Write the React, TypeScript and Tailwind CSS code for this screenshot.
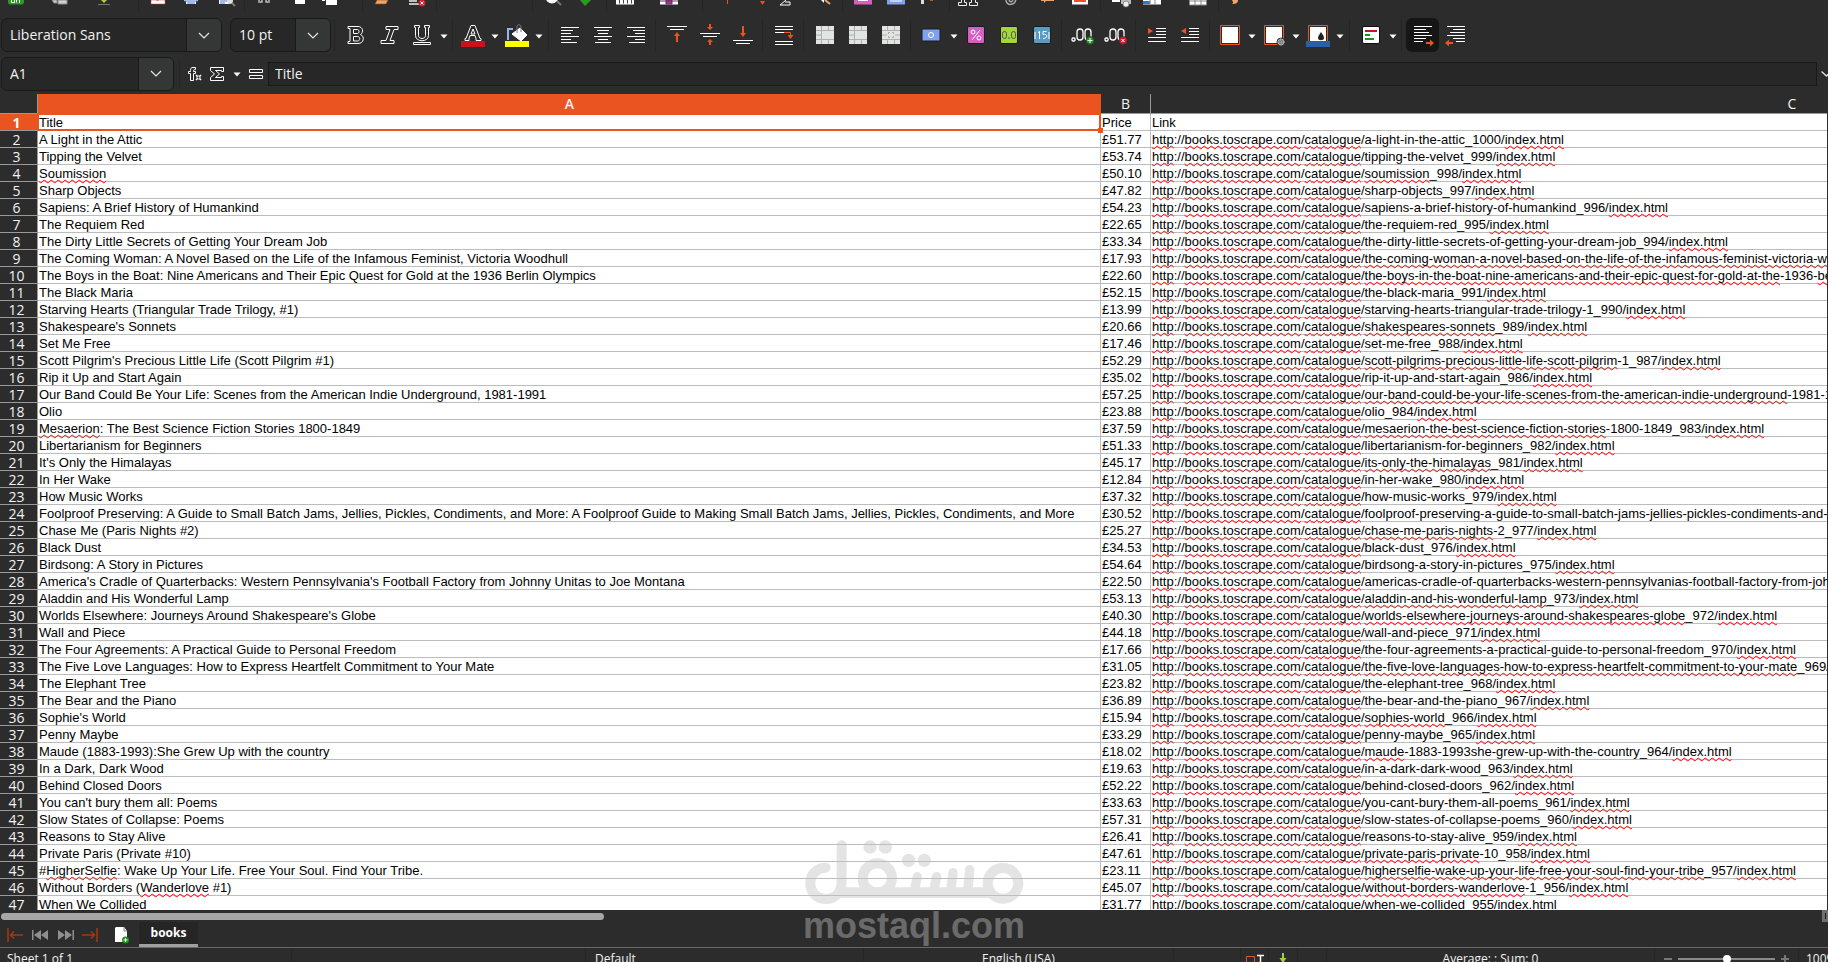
import type { ReactNode } from 'react';

// Braces mark the words that the spell checker underlines.
const books: [string, string, string][] = [
  ['A Light in the Attic', '51.77', 'a-light-in-the-attic_1000'],
  ['Tipping the Velvet', '53.74', 'tipping-the-velvet_999'],
  ['{Soumission}', '50.10', '{soumission}_998'],
  ['Sharp Objects', '47.82', 'sharp-objects_997'],
  ['Sapiens: A Brief History of Humankind', '54.23', 'sapiens-a-brief-history-of-humankind_996'],
  ['The Requiem Red', '22.65', 'the-requiem-red_995'],
  ['The Dirty Little Secrets of Getting Your Dream Job', '33.34', 'the-dirty-little-secrets-of-getting-your-dream-job_994'],
  [
    'The Coming Woman: A Novel Based on the Life of the Infamous Feminist, Victoria Woodhull',
    '17.93',
    '{the-coming-woman-a-novel-based-on-the-life-of-the-infamous-feminist-victoria-woodhull}_993',
  ],
  [
    'The Boys in the Boat: Nine Americans and Their Epic Quest for Gold at the 1936 Berlin Olympics',
    '22.60',
    '{the-boys-in-the-boat-nine-americans-and-their-epic-quest-for-gold-at-the}-1936-{berlin-olympics}_992',
  ],
  ['The Black Maria', '52.15', 'the-black-maria_991'],
  ['Starving Hearts (Triangular Trade Trilogy, #1)', '13.99', 'starving-hearts-triangular-trade-trilogy-1_990'],
  ["Shakespeare's Sonnets", '20.66', '{shakespeares-sonnets}_989'],
  ['Set Me Free', '17.46', 'set-me-free_988'],
  ["Scott Pilgrim's Precious Little Life (Scott Pilgrim #1)", '52.29', '{scott-pilgrims-precious-little-life-scott-pilgrim}-1_987'],
  ['Rip it Up and Start Again', '35.02', 'rip-it-up-and-start-again_986'],
  [
    'Our Band Could Be Your Life: Scenes from the American Indie Underground, 1981-1991',
    '57.25',
    '{our-band-could-be-your-life-scenes-from-the-american-indie-underground}-1981-1991_985',
  ],
  ['Olio', '23.88', 'olio_984'],
  ['{Mesaerion}: The Best Science Fiction Stories 1800-1849', '37.59', '{mesaerion-the-best-science-fiction-stories}-1800-1849_983'],
  ['Libertarianism for Beginners', '51.33', 'libertarianism-for-beginners_982'],
  ["It's Only the Himalayas", '45.17', '{its-only-the-himalayas}_981'],
  ['In Her Wake', '12.84', 'in-her-wake_980'],
  ['How Music Works', '37.32', 'how-music-works_979'],
  [
    'Foolproof Preserving: A Guide to Small Batch Jams, Jellies, Pickles, Condiments, and More: A Foolproof Guide to Making Small Batch Jams, Jellies, Pickles, Condiments, and More',
    '30.52',
    'foolproof-preserving-a-guide-to-small-batch-jams-jellies-pickles-condiments-and-more_978',
  ],
  ['Chase Me (Paris Nights #2)', '25.27', '{chase-me-paris-nights}-2_977'],
  ['Black Dust', '34.53', 'black-dust_976'],
  ['Birdsong: A Story in Pictures', '54.64', 'birdsong-a-story-in-pictures_975'],
  [
    "America's Cradle of Quarterbacks: Western Pennsylvania's Football Factory from Johnny Unitas to Joe Montana",
    '22.50',
    'americas-cradle-of-quarterbacks-western-pennsylvanias-football-factory-from-johnny-unitas_974',
  ],
  ['Aladdin and His Wonderful Lamp', '53.13', '{aladdin-and-his-wonderful-lamp}_973'],
  ["Worlds Elsewhere: Journeys Around Shakespeare's Globe", '40.30', '{worlds-elsewhere-journeys-around-shakespeares-globe}_972'],
  ['Wall and Piece', '44.18', 'wall-and-piece_971'],
  ['The Four Agreements: A Practical Guide to Personal Freedom', '17.66', 'the-four-agreements-a-practical-guide-to-personal-freedom_970'],
  [
    'The Five Love Languages: How to Express Heartfelt Commitment to Your Mate',
    '31.05',
    '{the-five-love-languages-how-to-express-heartfelt-commitment-to-your-mate}_969',
  ],
  ['The Elephant Tree', '23.82', 'the-elephant-tree_968'],
  ['The Bear and the Piano', '36.89', 'the-bear-and-the-piano_967'],
  ["Sophie's World", '15.94', '{sophies-world}_966'],
  ['Penny Maybe', '33.29', 'penny-maybe_965'],
  ['Maude (1883-1993):She Grew Up with the country', '18.02', '{maude}-1883-1993she-grew-up-with-the-country_964'],
  ['In a Dark, Dark Wood', '19.63', 'in-a-dark-dark-wood_963'],
  ['Behind Closed Doors', '52.22', 'behind-closed-doors_962'],
  ["You can't bury them all: Poems", '33.63', 'you-cant-bury-them-all-poems_961'],
  ['Slow States of Collapse: Poems', '57.31', 'slow-states-of-collapse-poems_960'],
  ['Reasons to Stay Alive', '26.41', 'reasons-to-stay-alive_959'],
  ['Private Paris (Private #10)', '47.61', '{private-paris-private}-10_958'],
  ['#{HigherSelfie}: Wake Up Your Life. Free Your Soul. Find Your Tribe.', '23.11', '{higherselfie-wake-up-your-life-free-your-soul-find-your-tribe}_957'],
  ['Without Borders ({Wanderlove} #1)', '45.07', '{without-borders-wanderlove}-1_956'],
  ['When We Collided', '31.77', 'when-we-collided_955'],
];

function Spelled({ text }: { text: string }) {
  return (
    <>
      {text.split(/[{}]/).map((part, i) =>
        i % 2 === 1 ? (
          <span key={i} className="underline decoration-[#ff0000] decoration-wavy decoration-1 underline-offset-1 [text-decoration-skip-ink:none]">
            {part}
          </span>
        ) : (
          part
        ),
      )}
    </>
  );
}

function Sep({ className = 'h-8 ml-[3px] mr-1' }: { className?: string }) {
  return <span className={`w-px shrink-0 bg-[#252525] ${className}`} />;
}

function Tool({ label, active, children }: { label: string; active?: boolean; children: ReactNode }) {
  return (
    <button
      type="button"
      aria-label={label}
      className={`flex h-[34px] w-[33px] shrink-0 items-center justify-center rounded-md ${active ? 'bg-[#161616]' : ''}`}
    >
      <svg viewBox="0 0 24 24" className="size-6" fill="none" stroke="#fff">
        {children}
      </svg>
    </button>
  );
}

function More({ label, className = 'w-[11px]' }: { label: string; className?: string }) {
  return (
    <button type="button" aria-label={label} className={`flex h-8 shrink-0 items-center justify-center ${className}`}>
      <svg viewBox="0 0 8 5" className="mt-0.5 h-[5px] w-2" fill="#fff">
        <path d="M0.5 0.5h7L4 4.5z" />
      </svg>
    </button>
  );
}

function Combo({ label, value, className }: { label: string; value: string; className: string }) {
  return (
    <div className={`relative h-[34px] shrink-0 overflow-hidden rounded-md border border-[#191919] bg-[#272727] ${className}`}>
      <select aria-label={label} className="h-full w-full appearance-none bg-transparent pl-2 text-sm text-[#f2f2f2] outline-none">
        <option>{value}</option>
      </select>
      <span className="pointer-events-none absolute inset-y-0 right-0 flex w-[35px] items-center justify-center border-l border-[#191919] bg-[#353737]">
        <svg viewBox="0 0 12 7" className="h-[7px] w-3" fill="none" stroke="#e6e6e6" strokeWidth="1.2">
          <path d="M1 1l5 5 5-5" />
        </svg>
      </span>
    </div>
  );
}

// Only the lower edge of the standard toolbar is in view.
const standardTools: { label: string; gap: string; icon?: ReactNode }[] = [
  { label: 'New', gap: 'ml-1.5', icon: <g><path d="M2 0h16v3l-1.500 1.500h-13L2 3z" fill="#2a9a22" /><path d="M5.500 0v2.500h3V0M10.500 2.500V0M13.500 0v3" stroke="#fff" /></g> },
  { label: 'Templates', gap: 'ml-6', icon: <path d="M2 0h5v3H4z M8 0h9v4H8z" fill="#d0d0d0" stroke="#8a8a8a" /> },
  { label: 'Save', gap: 'ml-6', icon: <g><path d="M7 0h6l-3 3z" fill="#a4d13a" /><path d="M4 4.5h12" stroke="#777" /></g> },
  { label: '', gap: 'ml-6' },
  { label: 'Export as PDF', gap: 'ml-[9px]', icon: <path d="M3 0h14v4H3z M8 1l3-1" fill="#fff" stroke="#c33" strokeWidth=".5" /> },
  { label: 'Print', gap: 'ml-[13px]', icon: <g><path d="M3 0h14v1H3z M5 1h10v3H5z" fill="#fff" /><path d="M3 1h14 M6 3h8" stroke="#4a76c9" /></g> },
  { label: 'Print Preview', gap: 'ml-4', icon: <g><path d="M2 0h10v4H2z" fill="#fff" /><path d="M3 1h7 M3 3h5" stroke="#4a76c9" /><circle cx="13" cy="1" r="3" fill="#ddd" /><path d="M15 3l3 3" stroke="#777" strokeWidth="2" /></g> },
  { label: '', gap: 'ml-[7px]' },
  { label: 'Cut', gap: 'ml-[9px]', icon: <path d="M5 0v2h3V0 M12 0v2h3V0" stroke="#bbb" strokeWidth="1.5" /> },
  { label: 'Copy', gap: 'ml-4', icon: <path d="M5 0h10v4H5z" fill="#fff" /> },
  { label: 'Paste', gap: 'ml-2.5', icon: <path d="M2 0h3v1H2z M6 0h11v5H6z" fill="#fff" /> },
  { label: '', gap: 'ml-[22px]' },
  { label: 'Clone Formatting', gap: 'ml-[9px]', icon: <path d="M5 0h11l-2 4H3z" fill="#f0a468" stroke="#8b4b20" strokeWidth=".6" /> },
  { label: 'Clear Formatting', gap: 'ml-[15px]', icon: <g><path d="M2 1h8 M2 4h10" stroke="#eee" strokeWidth="1.5" /><circle cx="15" cy="3" r="3.5" fill="#d0202c" /><path d="M13.5 1.5l3 3m0-3l-3 3" stroke="#fff" /></g> },
  { label: '', gap: 'ml-[9px]' },
  { label: '', gap: 'ml-[95px]' },
  { label: 'Find', gap: 'ml-2.5', icon: <g><circle cx="9" cy="-3" r="6.5" fill="#fff" /><path d="M14 1l4 4" stroke="#777" strokeWidth="2" /></g> },
  { label: 'Spelling', gap: 'ml-[13px]', icon: <path d="M4 0l5 6 6-6z" fill="#2a9a22" /> },
  { label: '', gap: 'ml-2.5' },
  { label: 'Row', gap: 'ml-2', icon: <g><path d="M1 0h18v4.500H1z" fill="#fff" /><path d="M4.500 0v3.500M8.500 0v3.500M12.500 0v3.500M16.500 0v3.500" stroke="#444" /></g> },
  { label: 'Column', gap: 'ml-6', icon: <g><path d="M1 0h18v4.500H1z" fill="#fff" /><path d="M7 0h6v4H7z M1 1h18" fill="#a0408e" stroke="#6b2a5e" /></g> },
  { label: '', gap: 'ml-[23px]' },
  { label: 'Sort', gap: 'ml-3.5', icon: <path d="M10.500 0v4" stroke="#e95420" /> },
  { label: 'Sort Ascending', gap: 'ml-[15px]', icon: <path d="M8 1h5l-2.500 4z" fill="#e95420" /> },
  { label: 'Sort Descending', gap: 'ml-[3px]', icon: <path d="M11 0L5 5h10V2h-5" stroke="#fff" /> },
  { label: 'Image', gap: 'ml-5', icon: <g><path d="M6 0l3 3V0z" fill="#fff" /><path d="M10 0l5 4" stroke="#f0a468" strokeWidth="2" /></g> },
  { label: '', gap: 'ml-[7px]' },
  { label: 'Insert Image', gap: 'ml-2.5', icon: <g><path d="M1 0h18v4.500H1z" fill="#d85ec4" /><path d="M5 0h10v1H5z" fill="#fff" /></g> },
  { label: 'Insert Chart', gap: 'ml-[13px]', icon: <g><path d="M1 0h18v4.500H1z" fill="#7ea1f0" /><path d="M4 1h12" stroke="#fff" /></g> },
  { label: 'Pivot Table', gap: 'ml-2.5', icon: <g><path d="M5 0h3v4H5z" fill="#ddd" /><path d="M14 0h3" stroke="#b85c20" strokeWidth="2" /></g> },
  { label: '', gap: 'ml-[13px]' },
  { label: 'Special Character', gap: 'ml-2', icon: <path d="M.500 5.500h8v-3h-2V0M11.500 5.500h8v-3h-2V0M.500 5.500v-3h3V0M11.500 5.500v-3h2V0" stroke="#eee" /> },
  { label: 'Hyperlink', gap: 'ml-[23px]', icon: <path d="M5 0c0 6 9 6 10-1 M8 0c1 3 4 2 4-1" stroke="#aaa" strokeWidth="1.5" /> },
  { label: 'Comment', gap: 'ml-4', icon: <path d="M4 0h13v1H9L7 3V1H4z" fill="#f0a468" /> },
  { label: 'Headers and Footers', gap: 'ml-[13px]', icon: <g><path d="M2 0h16v4.500H2z" fill="#fff" /><path d="M4 1h12" stroke="#e95420" strokeWidth="2" /></g> },
  { label: '', gap: 'ml-2.5' },
  { label: 'Print Area', gap: 'ml-[11px]', icon: <g><path d="M0 0h8v2H0z" fill="#fff" /><path d="M9 0h10v4H9z" fill="#bbb" /><circle cx="14" cy="4" r="3" fill="#eee" stroke="#888" /></g> },
  { label: 'Freeze', gap: 'ml-2.5', icon: <g><path d="M1 0h18v4.500H1z" fill="#fff" /><path d="M1 1h7v3H1z" fill="#2f78cc" /><path d="M8 0v4M13 0v4" stroke="#888" /></g> },
  { label: 'Split', gap: 'ml-[26px]', icon: <path d="M1.500 0v5h17V0M1 1h18M7 0v5M13 0v5" stroke="#888" fill="#fff" /> },
  { label: '', gap: 'ml-2.5' },
  { label: 'Draw', gap: 'ml-[5px]', icon: <path d="M8 0h6c0 3-2 4-6 4 2-1 1-2 0-4z" fill="#f0a468" /> },
];

function MergeIcon({ centered }: { centered?: boolean }) {
  return (
    <g>
      <path d="M3 3h18v18H3z" fill="#dfe5e2" stroke="none" />
      <path
        d={
          centered
            ? 'M3 7.500h18M3 16.500h18M8.500 3v4M15.500 3v4M8.500 17v4M15.500 17v4M3 12h5M16 12h5M9.500 9v2M14.500 9v2M9.500 15v-2M14.500 15v-2M9 9.500h2M13 9.500h2M9 14.500h2M13 14.500h2'
            : 'M3 7.500h18M3 16.500h18M8.500 3v18M15.500 3v4M15.500 17v4M3 12h5'
        }
        stroke="#b9a9a9"
      />
    </g>
  );
}

function FormattingBar() {
  return (
    <div className="flex h-9 shrink-0 items-center pl-px">
      <Combo label="Font Name" value="Liberation Sans" className="w-[221px]" />
      <Combo label="Font Size" value="10 pt" className="ml-2 w-[101px]" />
      <Sep />
      <Tool label="Bold">
        <path d="M4 3.500h10c5 0 6 6 2.500 8 4.500 2 3.500 9-2.500 9H4v-2h2v-13H4zM9.500 6.500v4h4c2 0 2-4 0-4zM9.500 13.500v4.500h4c3 0 3-4.500 0-4.500z" />
      </Tool>
      <Tool label="Italic">
        <path d="M9 3.500h12v3h-4l-4 11h4v3H4v-3h5l4-11H9z" />
      </Tool>
      <Tool label="Underline">
        <path d="M4.500 2.500h5v2H8.500v8c0 4 7 4 7 0v-8h-1v-2h5v2h-1v8c0 7-13 7-13 0v-8h-1zM3.500 19.500h17v2h-17z" />
      </Tool>
      <More label="Underline styles" />
      <Sep className="mx-[3px] h-8" />
      <Tool label="Font Color">
        <path d="M10 2.500h4l5 13h1v2h-5v-2l-1-3h-5l-1 3v2H4v-2h1zM12 6l-2 5h4z" />
        <path d="M0 18h24v6H0z" fill="#c9131c" stroke="none" />
      </Tool>
      <More label="Font Color palette" />
      <Tool label="Highlighting">
        <path d="M3 17V6h5" stroke="#8db8e8" strokeWidth="2" />
        <path d="M7 11l8-6 7 7-6 6z" fill="#fff" />
        <path d="M12 10V4c0-3 4-3 4 0v5" stroke="#777" />
        <path d="M0 18h24v6H0z" fill="#ffff00" stroke="none" />
      </Tool>
      <More label="Highlighting palette" />
      <Sep className="mx-1 h-8" />
      <Tool label="Align Left">
        <path d="M3 4.500h18M3 7.500h12M3 10.500h10M3 13.500h18M3 16.500h10M3 19.500h16" />
      </Tool>
      <Tool label="Center">
        <path d="M3 4.500h18M6 7.500h12M7 10.500h10M3 13.500h18M7 16.500h10M4 19.500h16" />
      </Tool>
      <Tool label="Align Right">
        <path d="M3 4.500h18M9 7.500h12M11 10.500h10M3 13.500h18M11 16.500h10M5 19.500h16" />
      </Tool>
      <Sep />
      <Tool label="Align Top">
        <path d="M2 3.500h20M5 6.500h14" />
        <path d="M11 19v-6H9l3-4 3 4h-2v6z" fill="#e95420" stroke="none" />
      </Tool>
      <Tool label="Center Vertically">
        <path d="M2 10.500h20M5 13.500h14" />
        <path d="M11 1h2v3h2l-3 3-3-3h2zM11 22h2v-3h2l-3-3-3 3h2z" fill="#e95420" stroke="none" />
      </Tool>
      <Tool label="Align Bottom">
        <path d="M2 17.500h20M5 20.500h14" />
        <path d="M11 3v7H9l3 4 3-4h-2V3z" fill="#e95420" stroke="none" />
      </Tool>
      <Sep />
      <Tool label="Wrap Text">
        <path d="M3 3.500h18M3 6.500h18M3 9.500h9M3 18.500h18M3 21.500h18" />
        <path d="M12 9.500h6.500V13" stroke="#e95420" />
        <path d="M15.500 12h6l-3 4z" fill="#e95420" stroke="none" />
      </Tool>
      <Sep />
      <Tool label="Merge and Center Cells">
        <MergeIcon />
      </Tool>
      <Tool label="Merge Cells">
        <MergeIcon />
      </Tool>
      <Tool label="Unmerge Cells">
        <MergeIcon centered />
      </Tool>
      <Sep />
      <Tool label="Format as Currency">
        <rect x="2" y="6" width="18" height="12" rx="1" fill="#7ea1f0" stroke="#1c1c1c" />
        <circle cx="11" cy="12" r="2.500" />
      </Tool>
      <More label="Currency formats" />
      <Tool label="Format as Percent">
        <rect x="3.500" y="3.500" width="17" height="17" rx="1.500" fill="#d85ec4" stroke="#1c1c1c" />
        <circle cx="9" cy="9" r="2" />
        <circle cx="15" cy="15" r="2" />
        <path d="M16 7L8 17" />
      </Tool>
      <Tool label="Format as Number">
        <rect x="3.500" y="3.500" width="17" height="17" rx="1.500" fill="#a2d63c" stroke="#1c1c1c" />
        <rect x="5.500" y="8.500" width="4" height="7" rx="2" stroke="#555" />
        <rect x="14.500" y="8.500" width="4" height="7" rx="2" stroke="#555" />
        <path d="M12 14v2" stroke="#555" />
      </Tool>
      <Tool label="Format as Date">
        <rect x="3.500" y="3.500" width="17" height="17" rx="1.500" fill="#5a9bc4" stroke="#1c1c1c" />
        <path d="M8 9.500l1.500-1V16M16.500 8.500H13v3c5-1 5 4 0 4M5 9v7M19 9v7" />
      </Tool>
      <Sep />
      <Tool label="Add Decimal Place">
        <g strokeWidth="1.300">
          <rect x="1" y="15" width="3" height="3" rx="1" />
          <rect x="6" y="6" width="6" height="11" rx="3" />
          <rect x="14" y="6" width="6" height="11" rx="3" />
        </g>
        <circle cx="19" cy="17.500" r="4" fill="#1f9320" stroke="#2c2c2c" strokeWidth=".6" />
        <path d="M16.500 17.500h5M19 15v5" />
      </Tool>
      <Tool label="Delete Decimal Place">
        <g strokeWidth="1.300">
          <rect x="1" y="15" width="3" height="3" rx="1" />
          <rect x="6" y="6" width="6" height="11" rx="3" />
          <rect x="14" y="6" width="6" height="11" rx="3" />
        </g>
        <circle cx="19" cy="17.500" r="4" fill="#d0202c" stroke="#2c2c2c" strokeWidth=".6" />
        <path d="M17.500 16l3 3m0-3l-3 3" />
      </Tool>
      <Sep />
      <Tool label="Increase Indent">
        <path d="M11 5.500h10M11 8.500h10M11 11.500h10M3 14.500h18M3 18.500h18" />
        <path d="M3 5v6l5-3z" fill="#e95420" stroke="none" />
      </Tool>
      <Tool label="Decrease Indent">
        <path d="M11 5.500h10M11 8.500h10M11 11.500h10M3 14.500h18M3 18.500h18" />
        <path d="M8 5v6L3 8z" fill="#e95420" stroke="none" />
      </Tool>
      <Sep className="mx-[3px] h-8" />
      <Tool label="Borders">
        <path d="M2.500 2.500h19v19h-19z" stroke="#e95420" />
        <path d="M4 4h16v16H4z" fill="#fff" stroke="none" />
      </Tool>
      <More label="Border positions" />
      <Tool label="Border Style">
        <path d="M2.500 2.500h19v19h-19z" stroke="#e95420" />
        <path d="M4 4h16v16H4z" fill="#fff" stroke="none" />
        <circle cx="19" cy="19" r="4" fill="#888" stroke="#2c2c2c" />
        <circle cx="19" cy="19" r="3" stroke="#ccc" strokeDasharray="1.500 1" />
      </Tool>
      <More label="Border styles" />
      <Tool label="Border Color">
        <path d="M2.500 2.500h19v19h-19z" stroke="#e95420" />
        <path d="M4 4h16v14H4z" fill="#fff" stroke="none" />
        <path d="M15 9c2 3 3 4 3 6 0 3-6 3-6 0 0-2 1-3 3-6z" fill="#222" stroke="none" />
        <path d="M0 18h24v6H0z" fill="#2a5fa5" stroke="none" />
      </Tool>
      <More label="Border colors" />
      <Sep className="mx-1 h-8" />
      <Tool label="Conditional Formatting">
        <rect x="3.500" y="3.500" width="17" height="17" rx="1.500" fill="#fff" stroke="#111" />
        <path d="M6 8h12" stroke="#c9131c" strokeWidth="2" />
        <path d="M6 12h5M6 16h9" stroke="#1f9320" strokeWidth="2" />
      </Tool>
      <More label="Conditional formats" />
      <Sep />
      <Tool label="Left-To-Right" active>
        <path d="M3 3.500h18M3 6.500h12M3 9.500h15M3 12.500h18M3 15.500h12M3 18.500h9" />
        <path d="M15 19h4v-2.500l4 3.500-4 3.500V21h-4z" fill="#e95420" stroke="none" />
      </Tool>
      <Tool label="Right-To-Left">
        <path d="M3 3.500h18M9 6.500h12M6 9.500h15M3 12.500h18M9 15.500h12M12 18.500h9" />
        <path d="M9 19H5v-2.500L1 20l4 3.500V21h4z" fill="#e95420" stroke="none" />
      </Tool>
    </div>
  );
}

function FormulaBar() {
  return (
    <div className="flex h-[41px] shrink-0 items-center pl-px">
      <Combo label="Name Box" value="A1" className="w-[173px]" />
      <Sep className="ml-[5px] mr-1 h-7" />
      <button type="button" aria-label="Function Wizard" className="flex w-[22px] justify-center">
        <svg viewBox="0 0 16 16" className="size-4" fill="none" stroke="#fff">
          <path d="M8.500 1.500H6c-2 0-2.500 1-2.500 3v1h-2v2h2v7h3v-7h2v-2h-2c0-1.500 0-2 2-2z" />
          <path d="M9 9l1.500 1.500M14 9l-1.500 1.500M9 14l1.500-1.500M14 14l-1.500-1.500" strokeWidth="1.500" />
          <circle cx="11.500" cy="11.500" r="1.500" />
        </svg>
      </button>
      <button type="button" aria-label="Select Function" className="flex w-[22px] justify-center">
        <svg viewBox="0 0 16 16" className="size-4" fill="none" stroke="#fff">
          <path d="M1.500 1.500h13v4h-2v-1H6.500l4 3.500-4 3.500h6v-1h2v4h-13v-3l4-3.500-4-3.500z" />
        </svg>
      </button>
      <More label="Functions" className="w-[17px]" />
      <button type="button" aria-label="Formula" className="flex w-[22px] justify-center">
        <svg viewBox="0 0 16 12" className="h-3 w-4" fill="none" stroke="#fff">
          <path d="M1.500 1.500h13v3h-13zM1.500 7.500h13v3h-13z" />
        </svg>
      </button>
      <input
        aria-label="Input line"
        defaultValue="Title"
        className="ml-px h-6 min-w-0 flex-1 border border-[#191919] bg-[#272727] px-1.5 text-sm text-[#f2f2f2] outline-none"
      />
      <button type="button" aria-label="Expand Formula Bar" className="flex w-[11px] justify-end overflow-hidden">
        <svg viewBox="0 0 7 6" className="h-1.5 w-[7px]" fill="none" stroke="#e6e6e6" strokeWidth="1.300">
          <path d="M0.500 0.500l5 4.500 5-5" />
        </svg>
      </button>
    </div>
  );
}

const head = 'border-b border-[#9a9a9a] p-0 text-center text-sm leading-4';
const rowHead = "border-b border-r border-[#9a9a9a] p-0 pt-px pr-1 text-center font-['Open_Sans','Noto_Sans',sans-serif] text-sm leading-[15px]";
const cell = 'h-[17px] border-b border-r border-[#bcbcbc] p-0 pt-px pl-px';

function Sheet() {
  return (
    <main className="min-h-0 flex-1 overflow-hidden pr-px">
      <div className="overflow-hidden">
        <table className="w-[2433px] table-fixed border-separate border-spacing-0 bg-white text-left font-['Liberation_Sans',Arial,sans-serif] text-[13px] leading-[15px] whitespace-pre text-black">
          <colgroup>
            <col className="w-[38px]" />
            <col className="w-[1063px]" />
            <col className="w-[50px]" />
            <col />
          </colgroup>
          <thead className="font-['Open_Sans','Noto_Sans',sans-serif] text-[#f2f2f2]">
            <tr className="h-5">
              <th className={`${head} border-r bg-[#2c2c2c]`} />
              <th scope="col" className={`${head} bg-[#e95420] font-semibold`}>
                A
              </th>
              <th scope="col" className={`${head} border-r bg-[#2c2c2c] font-normal`}>
                B
              </th>
              <th scope="col" className={`${head} bg-[#2c2c2c] font-normal`}>
                C
              </th>
            </tr>
          </thead>
          <tbody>
            <tr>
              <th scope="row" className={`${rowHead} bg-[#e95420] font-bold text-white`}>
                1
              </th>
              <td className={`relative ${cell}`}>
                Title
                <span className="absolute -inset-px border-2 border-[#e95420]" />
                <span className="absolute -right-[3px] -bottom-[3px] z-10 size-[5px] bg-[#e95420]" />
              </td>
              <td className={cell}>Price</td>
              <td className={cell}>Link</td>
            </tr>
            {books.map(([title, price, slug], i) => (
              <tr key={slug}>
                <th scope="row" className={`${rowHead} bg-[#2c2c2c] font-normal text-[#f2f2f2]`}>
                  {i + 2}
                </th>
                <td className={cell}>
                  <Spelled text={title} />
                </td>
                <td className={cell}>£{price}</td>
                <td className={cell}>
                  <Spelled text={`{http}://{books.toscrape.com}/{catalogue}/${slug}/{index.html}`} />
                </td>
              </tr>
            ))}
          </tbody>
        </table>
      </div>
    </main>
  );
}

function SheetTabs() {
  return (
    <div className="shrink-0 border-b border-[#6a6a6a]">
      <div className="flex h-3 justify-between pt-[3px] pl-px">
        <div className="h-[7px] w-[33%] rounded-sm bg-[#a6a6a6]" />
        <div className="-mt-[3px] flex h-3 w-1.5 items-center justify-center bg-[#6f6f6f]">
          <span className="h-1.5 w-px bg-[#1c1c1c]" />
        </div>
      </div>
      <div className="flex h-[25px] items-center pl-[7px] text-[#8f8f8f]">
        <button type="button" aria-label="First Sheet" className="w-[25px] text-[#a23a10]">
          <svg viewBox="0 0 16 14" className="h-3.5 w-4" fill="none" stroke="currentColor" strokeWidth="1.500">
            <path d="M1 0v14M3 7h13M7 3.500L3.500 7 7 10.500" />
          </svg>
        </button>
        <button type="button" aria-label="Previous Sheet" className="w-[26px]">
          <svg viewBox="0 0 16 10" className="h-2.5 w-4" fill="currentColor">
            <path d="M0 0h1.500v10H0zM9 0v10L2 5zM16 0v10L9 5z" />
          </svg>
        </button>
        <button type="button" aria-label="Next Sheet" className="w-6">
          <svg viewBox="0 0 16 10" className="h-2.5 w-4" fill="currentColor">
            <path d="M14.500 0H16v10h-1.500zM7 0v10l7-5zM0 0v10l7-5z" />
          </svg>
        </button>
        <button type="button" aria-label="Last Sheet" className="w-8 text-[#a23a10]">
          <svg viewBox="0 0 16 14" className="h-3.5 w-4" fill="none" stroke="currentColor" strokeWidth="1.500">
            <path d="M15 0v14M13 7H0M9 3.500L12.500 7 9 10.500" />
          </svg>
        </button>
        <button type="button" aria-label="Add Sheet" className="w-[25px]">
          <svg viewBox="0 0 16 18" className="h-[18px] w-4">
            <path d="M1 2l1-1h8l3 4v11H1z" fill="#fff" />
            <path d="M10 1v4h3" fill="none" stroke="#888" />
            <circle cx="11.500" cy="14" r="3.500" fill="#1f9320" />
            <path d="M9.500 14h4M11.500 12v4" stroke="#fff" />
          </svg>
        </button>
        <button type="button" className="h-full w-[59px] border-b-[3px] border-[#a0a0a0] bg-[#252525] text-xs font-bold text-white">
          books
        </button>
      </div>
    </div>
  );
}

const statusCell = 'flex items-center border-r border-[#262626]';

function StatusBar() {
  return (
    <footer className="h-3.5 shrink-0 overflow-hidden text-xs text-[#f2f2f2]">
      <div className="grid h-[22px] grid-cols-[292fr_294fr_278fr_310fr_67fr_28fr_29fr_29fr_328fr_144fr_29fr] whitespace-nowrap">
        <span className={`${statusCell} pl-[7px]`}>Sheet 1 of 1</span>
        <span className={statusCell} />
        <span className={`${statusCell} pl-[9px]`}>Default</span>
        <span className={`${statusCell} justify-center`}>English (USA)</span>
        <span className={statusCell} />
        <span className={`${statusCell} justify-center`}>
          <svg viewBox="0 0 20 12" className="h-3 w-5" fill="none">
            <path d="M1.500 3.500h8v6h-8z" stroke="#e95420" />
            <path d="M12 2.500h3l.5 1 .5-1h3M15.500 3v7M12 10.500h7" stroke="#fff" strokeWidth="1.500" />
          </svg>
        </span>
        <span className={`${statusCell} justify-center`}>
          <svg viewBox="0 0 10 12" className="h-3 w-2.5" fill="#a4d13a">
            <path d="M4 0h2v5h2.500L5 10 1.500 5H4z" />
          </svg>
        </span>
        <span className={statusCell} />
        <span className={`${statusCell} justify-center`}>Average: ; Sum: 0</span>
        <span className={`${statusCell} justify-center gap-1.5`}>
          <button type="button" aria-label="Zoom Out" className="h-0.5 w-2 bg-[#777]" />
          <input
            type="range"
            aria-label="Zoom"
            className="h-0.5 w-[97px] appearance-none bg-[#8a8a8a] [&::-webkit-slider-thumb]:size-2 [&::-webkit-slider-thumb]:appearance-none [&::-webkit-slider-thumb]:rounded-full [&::-webkit-slider-thumb]:bg-white"
          />
          <button type="button" aria-label="Zoom In">
            <svg viewBox="0 0 8 8" className="size-2" stroke="#777" strokeWidth="2">
              <path d="M4 0v8M0 4h8" />
            </svg>
          </button>
        </span>
        <span className="flex items-center overflow-hidden pl-[7px]">100%</span>
      </div>
    </footer>
  );
}

function Watermark() {
  return (
    <div className="pointer-events-none absolute bottom-4 left-1/2 flex -translate-x-1/2 flex-col items-center text-[#c1c1c1] opacity-[0.42]">
      <svg viewBox="70 30 660 204" className="h-[68px] w-[220px]" fill="none" stroke="currentColor" strokeWidth="30" strokeLinecap="round" role="img" aria-label="مستقل">
        <circle cx="667" cy="166" r="46" />
        <path d="M175 194H640" strokeWidth="32" strokeLinecap="butt" />
        <path d="M567 125L562 184M517 134L511 184M468 146L460 184M410 146L402 184" strokeWidth="28" />
        <g fill="currentColor" stroke="none">
          <circle cx="384" cy="97" r="20" />
          <circle cx="431" cy="97" r="20" />
          <circle cx="268" cy="57" r="20" />
          <circle cx="314" cy="57" r="20" />
        </g>
        <circle cx="290" cy="150" r="44" />
        <path d="M135 119A46 47 0 0 0 134 213C162 213 183 194 183 160V52" />
      </svg>
      <span className="font-['Liberation_Sans',Arial,sans-serif] text-4xl font-bold">mostaql.com</span>
    </div>
  );
}

export default function App() {
  return (
    <div className="relative flex h-screen flex-col overflow-hidden bg-[#2c2c2c] font-['Open_Sans','Noto_Sans',sans-serif]">
      <div className="flex h-[17px] shrink-0 items-start overflow-hidden">
        {standardTools.map(({ label, gap, icon }, i) =>
          icon ? (
            <button key={i} type="button" aria-label={label} className={`w-5 shrink-0 ${gap}`}>
              <svg viewBox="0 0 20 14" className="h-3.5 w-5" fill="none">
                {icon}
              </svg>
            </button>
          ) : (
            <Sep key={i} className={`h-3 ${gap}`} />
          ),
        )}
      </div>
      <FormattingBar />
      <FormulaBar />
      <Sheet />
      <SheetTabs />
      <StatusBar />
      <Watermark />
    </div>
  );
}
